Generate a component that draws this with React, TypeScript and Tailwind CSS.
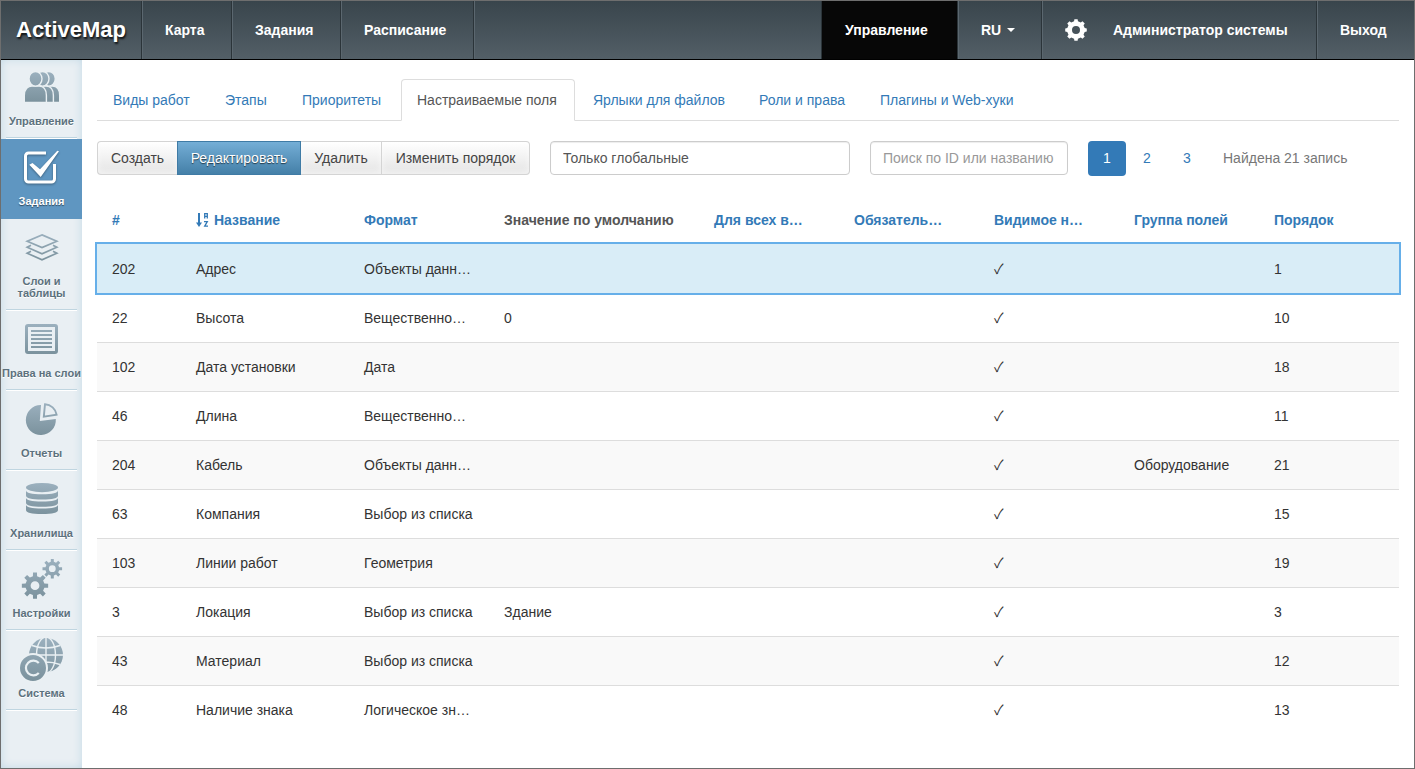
import { ReactNode, useState } from "react";
import clsx from "clsx";

type Field = {
  id: number;
  name: string;
  format: string;
  defaultValue?: string;
  group?: string;
  order: number;
};

const fields: Field[] = [
  { id: 202, name: "Адрес", format: "Объекты данн…", order: 1 },
  { id: 22, name: "Высота", format: "Вещественно…", defaultValue: "0", order: 10 },
  { id: 102, name: "Дата установки", format: "Дата", order: 18 },
  { id: 46, name: "Длина", format: "Вещественно…", order: 11 },
  { id: 204, name: "Кабель", format: "Объекты данн…", group: "Оборудование", order: 21 },
  { id: 63, name: "Компания", format: "Выбор из списка", order: 15 },
  { id: 103, name: "Линии работ", format: "Геометрия", order: 19 },
  { id: 3, name: "Локация", format: "Выбор из списка", defaultValue: "Здание", order: 3 },
  { id: 43, name: "Материал", format: "Выбор из списка", order: 12 },
  { id: 48, name: "Наличие знака", format: "Логическое зн…", order: 13 },
];

const columns = [
  { title: "#", width: "w-[84px]", sortable: true },
  { title: "Название", width: "w-[168px]", sortable: true, sorted: true },
  { title: "Формат", width: "w-[140px]", sortable: true },
  { title: "Значение по умолчанию", width: "w-[210px]", sortable: false },
  { title: "Для всех в…", width: "w-[140px]", sortable: true },
  { title: "Обязатель…", width: "w-[140px]", sortable: true },
  { title: "Видимое н…", width: "w-[140px]", sortable: true },
  { title: "Группа полей", width: "w-[140px]", sortable: true },
  { title: "Порядок", width: "w-[140px]", sortable: true },
];

const tabs = [
  { title: "Виды работ", width: "w-[110px]" },
  { title: "Этапы", width: "w-[75px]" },
  { title: "Приоритеты", width: "w-[113px]" },
  { title: "Настраиваемые поля", width: "w-[174px]" },
  { title: "Ярлыки для файлов", width: "w-[164px]" },
  { title: "Роли и права", width: "w-[119px]" },
  { title: "Плагины и Web-хуки", width: "w-[166px]" },
];

// Outline of a cog with a round hole, used with fillRule="evenodd"
const gearPath = (cx: number, cy: number, outer: number, inner: number, hole: number, teeth: number) => {
  const step = (Math.PI * 2) / teeth;
  const at = (r: number, a: number) =>
    `${(cx + r * Math.cos(a)).toFixed(2)} ${(cy + r * Math.sin(a)).toFixed(2)}`;
  const points: string[] = [];
  for (let i = 0; i < teeth; i++) {
    const a = i * step - Math.PI / 2;
    points.push(
      at(inner, a - step * 0.28),
      at(outer, a - step * 0.19),
      at(outer, a + step * 0.19),
      at(inner, a + step * 0.28)
    );
  }
  return `M${points.join("L")}Z M${cx + hole} ${cy}a${hole} ${hole} 0 1 0 ${-2 * hole} 0a${hole} ${hole} 0 1 0 ${2 * hole} 0Z`;
};

const SideIcon = ({ id, width, height, children }: { id: string; width: number; height: number; children: (paint: string) => ReactNode }) => (
  <svg width={width} height={height} viewBox={`0 0 ${width} ${height}`} fill="none" className="overflow-visible" aria-hidden="true">
    <defs>
      <linearGradient id={id} gradientUnits="userSpaceOnUse" x1="0" y1="0" x2="0" y2={height}>
        <stop offset="0" stopColor="#9bb0be" />
        <stop offset="1" stopColor="#7b929d" />
      </linearGradient>
    </defs>
    {children(`url(#${id})`)}
  </svg>
);

const UsersIcon = () => (
  <SideIcon id="users" width={34} height={30}>
    {(paint) => (
      <g fill={paint} stroke="#eaf0f3" strokeWidth="1.4">
        {[13.3, 7, 0].map((x) => (
          <g key={x}>
            <path d={`M${x - 0.7} 30.5V23.500C${x - 0.7} 17 ${x + 3} 14 ${x + 7} 14H${x + 14}C${x + 18} 14 ${x + 21.4} 17 ${x + 21.4} 23.500V30.500Z`} />
            <ellipse cx={x + 10.5} cy="6.8" rx="6.5" ry="7.3" />
          </g>
        ))}
      </g>
    )}
  </SideIcon>
);

const TasksIcon = () => (
  <svg width="35" height="34" viewBox="0 0 35 34" fill="none" className="drop-shadow-[0_1px_1px_rgba(0,0,0,0.35)]" aria-hidden="true">
    <path d="M22 3H4.5A3 3 0 0 0 1.500 6V29A3 3 0 0 0 4.500 32H27.500A3 3 0 0 0 30.500 29V14" stroke="#fff" strokeWidth="3" />
    <path d="M5.3 14.7L8.500 13L16 19.300L33.300 .7L35 1.300L16.700 27Z" fill="#fff" />
  </svg>
);

const LayersIcon = () => (
  <SideIcon id="layers" width={32} height={27}>
    {(paint) => (
      <g stroke={paint} strokeWidth="1.7">
        <path d="M16 .9L30.800 7.200L16 13.500L1.200 7.200Z" />
        <path d="M5 11.300L1.200 13.200L16 19.700L30.800 13.200L27 11.300" />
        <path d="M5 17.300L1.200 19.200L16 25.800L30.800 19.200L27 17.300" />
      </g>
    )}
  </SideIcon>
);

const ListIcon = () => (
  <SideIcon id="list" width={33} height={30}>
    {(paint) => (
      <>
        <rect x="1.5" y="1.5" width="30" height="27" rx="1.5" stroke={paint} strokeWidth="3" />
        <path d="M6 6h21v2H6zM6 10h21v2H6zM6 14h21v2H6zM6 18h21v2H6zM6 22h21v2H6z" fill={paint} />
      </>
    )}
  </SideIcon>
);

const PieIcon = () => (
  <SideIcon id="pie" width={32} height={32}>
    {(paint) => (
      <>
        <path d="M13.8 18L15 2A15 15 0 1 0 29.8 16Z" fill={paint} />
        <path d="M17.8 13.6L19 1.2A12.5 12.5 0 0 1 30.6 11.6Z" stroke={paint} strokeWidth="1.9" />
      </>
    )}
  </SideIcon>
);

const StorageIcon = () => (
  <SideIcon id="storage" width={32} height={32}>
    {(paint) => (
      <g fill={paint}>
        <ellipse cx="16" cy="4.6" rx="16" ry="4.6" />
        {[7.2, 14.4, 21.6].map((y) => (
          <path key={y} d={`M0 ${y}q0 4 16 4t16 -4v5.400q0 4 -16 4t-16 -4z`} />
        ))}
      </g>
    )}
  </SideIcon>
);

const GearsIcon = () => (
  <SideIcon id="gears" width={40} height={40}>
    {(paint) => (
      <g fill={paint} fillRule="evenodd">
        <path d={gearPath(30.3, 9.7, 9.9, 7, 3.4, 8)} />
        <path d={gearPath(13, 26.7, 13.3, 9.6, 4.4, 8)} />
      </g>
    )}
  </SideIcon>
);

const SystemIcon = () => (
  <SideIcon id="system" width={43} height={43}>
    {(paint) => (
      <>
        <circle cx="26" cy="17" r="17" fill={paint} />
        <g stroke="#eaf0f3" strokeWidth="1.4">
          <path d="M26 0V34M9 17H43M12 7.500Q26 12.500 40 7.500M12 26.500Q26 21.500 40 26.500" />
          <ellipse cx="26" cy="17" rx="9.5" ry="18" />
        </g>
        <circle cx="13" cy="30" r="14" fill={paint} stroke="#eaf0f3" strokeWidth="2" />
        <path d="M18.800 25A7.400 7.400 0 1 0 18.800 35" stroke="#eaf0f3" strokeWidth="2.200" />
      </>
    )}
  </SideIcon>
);

const SortIcon = () => (
  <svg width="14" height="14" viewBox="0 0 14 14" fill="none" stroke="currentColor" aria-hidden="true">
    <path d="M3 0V11" strokeWidth="2" />
    <path d="M0 9.500H6L3 14Z" fill="currentColor" stroke="none" />
    <path d="M8.700 5.500V.7H11.300V5.500M8.700 3.300H11.300" strokeWidth="1.300" />
    <path d="M8 8.700H11.300L8.700 13.200H12" strokeWidth="1.300" />
  </svg>
);

const sections = [
  { title: "Управление", icon: <UsersIcon /> },
  { title: "Задания", icon: <TasksIcon />, active: true },
  { title: "Слои и таблицы", icon: <LayersIcon />, wrap: true },
  { title: "Права на слои", icon: <ListIcon /> },
  { title: "Отчеты", icon: <PieIcon /> },
  { title: "Хранилища", icon: <StorageIcon /> },
  { title: "Настройки", icon: <GearsIcon /> },
  { title: "Система", icon: <SystemIcon /> },
];

const navItem = "flex items-center pl-[22px] border-l border-l-[#5b676f] border-r border-r-[#2b3439]";

const Header = () => (
  <header className="relative z-10 flex h-[58px] justify-between bg-gradient-to-b from-[#39454c] to-[#535f67] text-sm font-bold text-white shadow-[0_1px_0_#000]">
    <div className="flex">
      <a href="#" className="flex w-[141px] items-center border-r border-r-[#2b3439] pl-[15px] text-[22px] [text-shadow:1px_2px_2px_rgba(0,0,0,0.8)]">
        ActiveMap
      </a>
      <nav className="flex">
        <a href="#map" className={clsx(navItem, "w-[90px]")}>Карта</a>
        <a href="#tasks" className={clsx(navItem, "w-[109px]")}>Задания</a>
        <a href="#schedule" className={clsx(navItem, "w-[133px]")}>Расписание</a>
        <span className="border-l border-l-[#5b676f]" />
      </nav>
    </div>
    <div className="flex">
      <a href="#manage" className="flex w-[137px] items-center border-x border-[#2b3439] bg-[#070707] pl-[23px]">
        Управление
      </a>
      <button className={clsx(navItem, "w-[84px] gap-[6px]")}>
        RU
        <span className="border-x-4 border-t-4 border-x-transparent border-t-white" />
      </button>
      <a href="#profile" className={clsx(navItem, "w-[275px] gap-[26px]")}>
        <svg width="22" height="22" viewBox="0 0 22 22" fill="#fff" fillRule="evenodd" aria-hidden="true">
          <path d={gearPath(11, 11, 10.9, 8.9, 4, 8)} />
        </svg>
        Администратор системы
      </a>
      <a href="#logout" className="flex w-[97px] items-center border-l border-l-[#5b676f] pl-[22px]">
        Выход
      </a>
    </div>
  </header>
);

const Sidebar = () => (
  <nav className="w-[81px] shrink-0 bg-[#e9eff3] text-center text-[11px] leading-3 font-bold text-[#5c717d] shadow-[inset_0_0_10px_#c3d9e6]">
    {sections.map((section) => (
      <div key={section.title} className={clsx(section.active && "bg-[#5f96c1]")}>
        <a
          href="#section"
          className={clsx(
            "flex flex-col items-center pb-[10px]",
            section.active
              ? "text-white [text-shadow:0_1px_1px_rgba(0,0,0,0.5)]"
              : "[text-shadow:0_1px_0_#fff]"
          )}
        >
          <span className="flex h-14 items-center">{section.icon}</span>
          <span className={section.wrap ? "w-16" : "whitespace-nowrap"}>{section.title}</span>
        </a>
        <div
          className={clsx(
            "mx-[5px] h-[2px]",
            !section.active && "border-t border-b border-t-[#bfd5e0] border-b-white"
          )}
        />
      </div>
    ))}
  </nav>
);

const actionButton =
  "h-[34px] border-[#d4d4d4] bg-gradient-to-b from-white to-[#e4e4e4] whitespace-nowrap text-[#444] shadow-[inset_0_-2px_6px_rgba(255,255,255,0.6)]";

const Toolbar = ({ page, onPage }: { page: number; onPage: (page: number) => void }) => (
  <div className="mt-5 flex gap-5">
    <div className="flex">
      <button className={clsx(actionButton, "w-20 rounded-l border border-r-0")}>Создать</button>
      <button className="h-[34px] w-[124px] border border-[#3f7ba5] bg-gradient-to-b from-[#74aed6] to-[#4480a8] text-white [text-shadow:0_1px_1px_rgba(0,0,0,0.6)]">
        Редактировать
      </button>
      <button className={clsx(actionButton, "w-[81px] border border-l-0")}>Удалить</button>
      <button className={clsx(actionButton, "w-[148px] rounded-r border border-l-0")}>Изменить порядок</button>
    </div>
    <select
      aria-label="Область полей"
      className="h-[34px] w-[300px] appearance-none rounded border border-[#ccc] bg-white px-3 text-[#555] shadow-[inset_0_1px_1px_rgba(0,0,0,0.075)]"
    >
      <option>Только глобальные</option>
    </select>
    <input
      type="text"
      aria-label="Поиск"
      placeholder="Поиск по ID или названию"
      className="h-[34px] w-[198px] rounded border border-[#ccc] bg-white px-3 shadow-[inset_0_1px_1px_rgba(0,0,0,0.075)] placeholder:text-[#999]"
    />
    <div className="flex items-center">
      <div className="flex gap-[2px]">
        {[1, 2, 3].map((n) => (
          <button
            key={n}
            onClick={() => onPage(n)}
            className={clsx("-my-px h-[35px] w-[38px] rounded", n === page ? "bg-[#337ab7] text-white" : "text-[#337ab7]")}
          >
            {n}
          </button>
        ))}
      </div>
      <span className="ml-[17px] text-[#777]">Найдена 21 запись</span>
    </div>
  </div>
);

const App = () => {
  const [activeTab, setActiveTab] = useState("Настраиваемые поля");
  const [page, setPage] = useState(1);
  const [selectedId, setSelectedId] = useState(202);

  return (
    <div className="flex min-h-screen flex-col border border-[#6e6e6e] bg-white font-['Liberation_Sans',Arial,sans-serif] text-sm leading-5 text-[#333]">
      <Header />
      <div className="flex grow">
        <Sidebar />
        <main className="min-w-0 grow px-[15px] pt-5">
          {/* Tabs */}
          <div className="flex gap-[2px] border-b border-[#ddd]">
            {tabs.map((tab) => (
              <button
                key={tab.title}
                onClick={() => setActiveTab(tab.title)}
                className={clsx(
                  "-mb-px h-[42px] rounded-t border px-[15px] text-left whitespace-nowrap",
                  tab.width,
                  tab.title === activeTab
                    ? "border-[#ddd] border-b-white bg-white text-[#555]"
                    : "border-transparent text-[#337ab7]"
                )}
              >
                {tab.title}
              </button>
            ))}
          </div>

          <Toolbar page={page} onPage={setPage} />

          {/* Fields table */}
          <table className="mt-5 w-full table-fixed border-separate border-spacing-0 text-left">
            <thead>
              <tr>
                {columns.map((column) => (
                  <th key={column.title} className={clsx(column.width, "h-[49px] px-[15px] whitespace-nowrap text-[#555]")}>
                    {column.sortable ? (
                      <a href="#sort" className="flex items-center gap-1 text-[#337ab7]">
                        {column.sorted && <SortIcon />}
                        {column.title}
                      </a>
                    ) : (
                      column.title
                    )}
                  </th>
                ))}
              </tr>
            </thead>
            <tbody>
              {fields.map((field, index) => (
                <tr
                  key={field.id}
                  onClick={() => setSelectedId(field.id)}
                  className={clsx(
                    "whitespace-nowrap *:h-[49px] *:border-t *:px-[15px]",
                    field.id === selectedId
                      ? "bg-[#d9edf7] outline-2 outline-[#66afe9] *:border-transparent"
                      : "*:border-[#ddd]",
                    field.id !== selectedId && index % 2 === 0 && "bg-[#f9f9f9]"
                  )}
                >
                  <td>{field.id}</td>
                  <td>{field.name}</td>
                  <td>{field.format}</td>
                  <td>{field.defaultValue}</td>
                  <td />
                  <td />
                  <td className="font-['Liberation_Sans','Noto_Sans_CJK_JP',sans-serif]">✓</td>
                  <td>{field.group}</td>
                  <td>{field.order}</td>
                </tr>
              ))}
            </tbody>
          </table>
        </main>
      </div>
    </div>
  );
};

export default App;
